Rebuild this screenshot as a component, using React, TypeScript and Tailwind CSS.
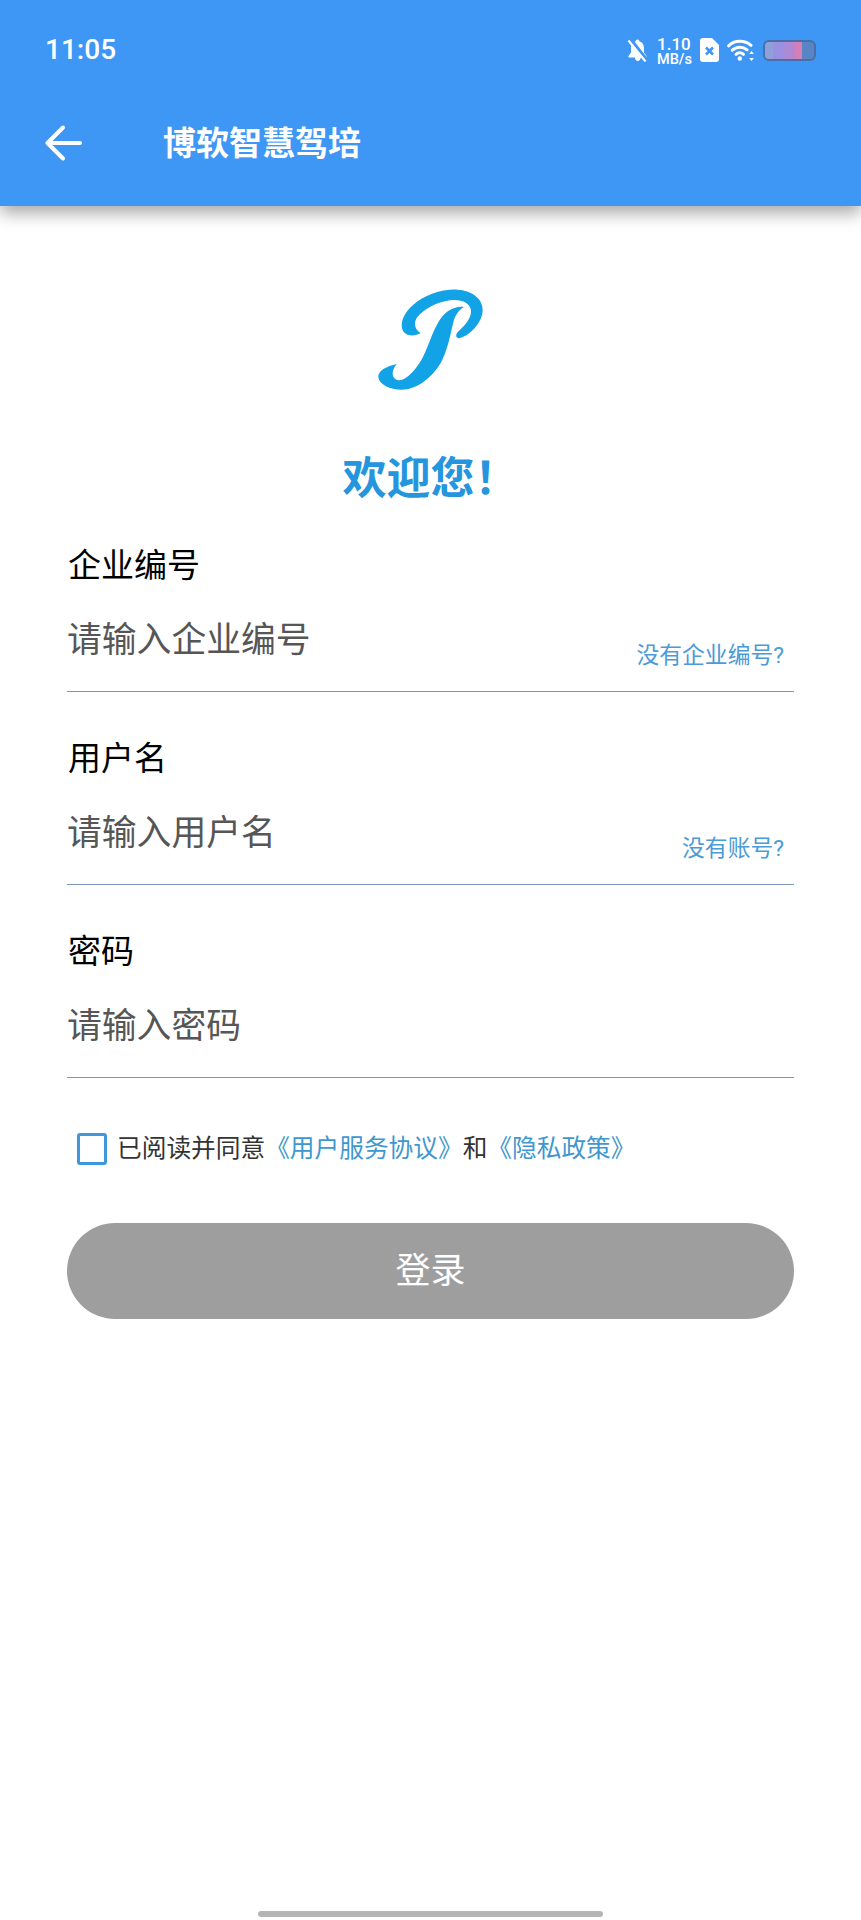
const cjk = "font-['Roboto','Noto_Sans_CJK_SC',sans-serif]";

function Field({ label, placeholder, link }: { label: string; placeholder: string; link?: string }) {
  return (
    <div className="mb-[47px]">
      <div className="pl-[1px] text-[33px] leading-[40px] text-black">{label}</div>
      <div className="mt-[34px] box-content flex h-[71px] justify-between border-b border-[#7b98b8]">
        <span className="text-[34.8px] leading-[40px] text-[#565656]">{placeholder}</span>
        {link && <span className="mt-[21px] pr-[10px] text-[22.8px] leading-[30px] text-[#4a9bd6]">{link}</span>}
      </div>
    </div>
  );
}

function StatusIcons() {
  return (
    <div className="flex items-center">
      <svg width="21" height="23" viewBox="0 0 21 23">
        <path fill="white" d="M10.500 0.500c-1.100 0-1.800.8-1.800 1.800C5.500 3.200 4 6 4 9v4.500L1.500 17v1.500H8c0 2 1.200 3.500 2.800 3.500s2.800-1.500 2.800-3.500H19.500V17L17 13.500V9c0-3-1.500-5.800-4.700-6.700 0-1-.7-1.800-1.800-1.800z" />
        <path d="M3 0.500 20 22" stroke="#3f97f5" strokeWidth="4.500" />
        <path d="M1.500 1.500 18.500 22.500" stroke="white" strokeWidth="2.200" />
      </svg>
      <div className="ml-[9px] flex w-[36px] flex-col items-start pt-[2px] font-['Roboto',sans-serif] font-medium text-white">
        <span className="text-[17px] leading-[17px]">1.10</span>
        <span className="text-[14.5px] leading-[13px]">MB/s</span>
      </div>
      <svg className="ml-[7px]" width="19" height="24" viewBox="0 0 19 24">
        <path d="M3 0h9l7 7v14a3 3 0 0 1-3 3H3a3 3 0 0 1-3-3V3a3 3 0 0 1 3-3z" fill="white" />
        <path d="M6 9.500l7 7M13 9.500l-7 7" stroke="#3f97f5" strokeWidth="2.600" />
      </svg>
      <svg className="ml-[8px]" width="28" height="22" viewBox="0 0 28 22" fill="none" stroke="white" strokeLinecap="round">
        <path d="M1.700 6.800C7.500 .8 17.500 .8 24 6.300" strokeWidth="3" />
        <path d="M5.300 11.200c4.200-4 10.400-4 14.800-.3" strokeWidth="3" />
        <path d="M9 15.300c2.200-2 5.300-2 7.500 0" strokeWidth="3" />
        <circle cx="12.800" cy="19.500" r="2.200" fill="white" stroke="none" />
        <path d="M24.500 12l-2.300 3h4.600zM24.500 22l-2.300-3h4.600z" fill="white" stroke="none" />
      </svg>
      <div className="ml-[8px] flex h-[21px] w-[53px] overflow-hidden rounded-[6px] border-2 border-[#4a6fa8] bg-[#5a85c4]">
        <div className="w-[8px] bg-[#8f9fd8]" />
        <div className="w-[10px] bg-[#9a8fe0]" />
        <div className="w-[8px] bg-[#a98bd8]" />
        <div className="w-[4px] bg-[#c183c8]" />
        <div className="w-[7px] bg-[#d47fb8]" />
      </div>
    </div>
  );
}

export default function App() {
  return (
    <div className={`${cjk} relative h-[1920px] w-[861px] overflow-hidden bg-white`}>
      <header className="h-[206px] bg-[#3f97f5] shadow-[0_7px_16px_rgba(0,0,0,0.35)]">
        <div className="flex h-[100px] items-center justify-between pl-[45px] pr-[45px]">
          <span className="font-['Roboto',sans-serif] text-[28px] font-medium leading-none text-white">11:05</span>
          <StatusIcons />
        </div>
        <div className="flex h-[86px] items-center pl-[45px]">
          <svg width="37" height="36" viewBox="0 0 37 36" fill="none" stroke="white" strokeWidth="4" strokeLinecap="round" strokeLinejoin="round">
            <path d="M35 18H3M18 2.500 2.500 18 18 33.500" />
          </svg>
          <span className="ml-[81px] text-[33px] font-bold leading-none text-white">博软智慧驾培</span>
        </div>
      </header>

      <main className="px-[67px]">
        <div className="mt-[77px] flex justify-center pr-[2px]">
          <svg width="120" height="115" viewBox="0 0 360 345">
            <path fill="#12a2e6" d="M80 243C50 250 25 262 25 282C27 305 60 320 95 320C140 320 185 285 212 240C232 205 240 160 250 118C255 98 265 82 282 72C250 68 222 88 205 118C185 150 175 195 152 235C130 270 105 293 85 292C65 288 62 265 80 243Z" />
            <path fill="#12a2e6" d="M152 150C135 160 108 162 98 142C88 118 105 85 130 65C165 36 215 18 262 20C305 22 338 47 338 80C338 115 305 155 268 166C258 166 255 155 264 146C285 128 305 105 303 82C300 60 275 48 240 52C200 58 160 78 140 105C130 122 135 140 152 150Z" />
          </svg>
        </div>
        <h1 className="mt-[51px] text-center text-[44px] font-bold leading-[60px] text-[#2595de]">欢迎您！</h1>

        <div className="mt-[37px]">
          <Field label="企业编号" placeholder="请输入企业编号" link="没有企业编号?" />
          <Field label="用户名" placeholder="请输入用户名" link="没有账号?" />
          <Field label="密码" placeholder="请输入密码" />
        </div>

        <div className="mt-[55px] flex items-center pl-[10px]">
          <div className="h-[32px] w-[30px] rounded-[3px] border-[3px] border-[#3f97dc]" />
          <p className="ml-[10px] text-[24.7px] leading-[32px] text-[#333333]">
            已阅读并同意<span className="text-[#3f97cf]">《用户服务协议》</span>和<span className="text-[#3f97cf]">《隐私政策》</span>
          </p>
        </div>

        <button className="mt-[58px] flex h-[96px] w-full items-center justify-center rounded-full bg-[#9e9e9e] text-[35px] leading-none text-white">
          登录
        </button>
      </main>

      <div className="absolute bottom-[3px] left-[258px] h-[6px] w-[345px] rounded-full bg-[#b5b5b5]" />
    </div>
  );
}
